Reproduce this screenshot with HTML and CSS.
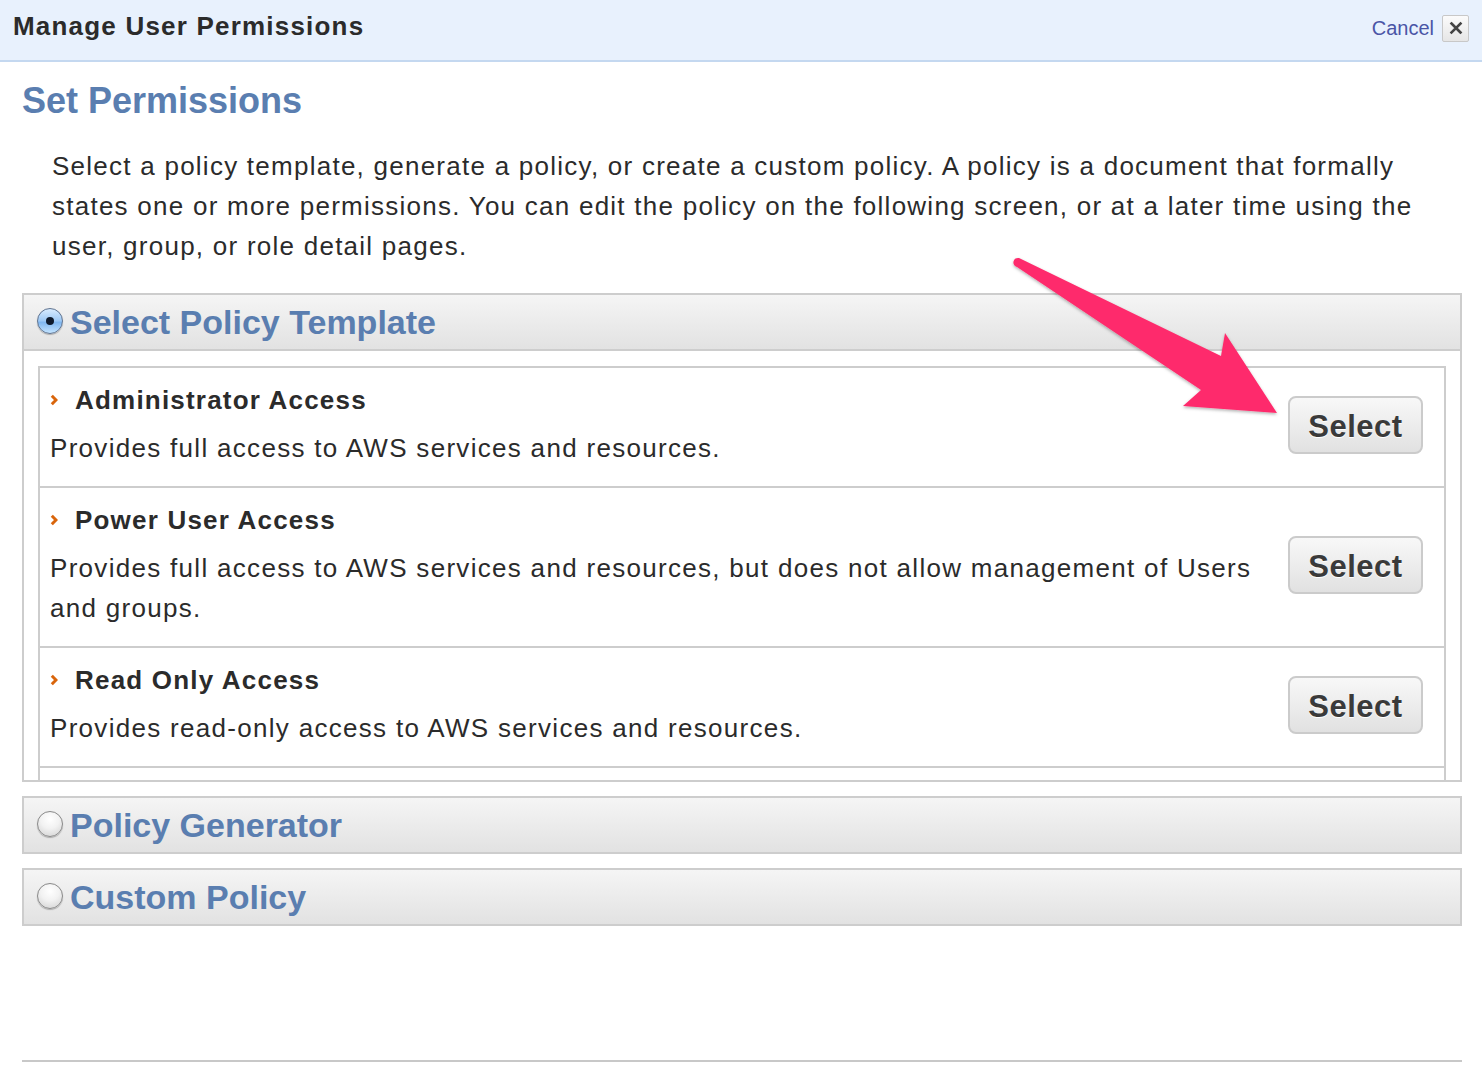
FILE: index.html
```html
<!DOCTYPE html>
<html>
<head>
<meta charset="utf-8">
<title>Manage User Permissions</title>
<link rel="stylesheet" href="styles.css">
</head>
<body>
<header class="topbar">
  <h1 class="topbar-title">Manage User Permissions</h1>
  <div class="topbar-actions">
    <a class="cancel-link" href="#">Cancel</a>
    <span class="close-box">
      <svg width="14" height="14" viewBox="0 0 14 14"><path d="M2.5 2.5 L11.5 11.5 M11.5 2.5 L2.5 11.5" stroke="#444" stroke-width="2.6" stroke-linecap="square"/></svg>
    </span>
  </div>
</header>

<main class="content">
  <h2 class="page-heading">Set Permissions</h2>
  <p class="intro">Select a policy template, generate a policy, or create a custom policy. A policy is a document that formally states one or more permissions. You can edit the policy on the following screen, or at a later time using the user, group, or role detail pages.</p>

  <section class="panel">
    <div class="panel-head">
      <span class="radio radio-on"><span class="radio-dot"></span></span>
      <span class="panel-title">Select Policy Template</span>
    </div>
    <div class="panel-body">
      <ul class="policy-list">
        <li class="policy">
          <div class="policy-text">
            <div class="policy-name"><svg class="chev" width="8" height="12" viewBox="0 0 8 12"><path d="M1.8 1.8 L6 6 L1.8 10.2" fill="none" stroke="#d9650b" stroke-width="3"/></svg>Administrator Access</div>
            <div class="policy-desc">Provides full access to AWS services and resources.</div>
          </div>
          <button class="select-btn">Select</button>
        </li>
        <li class="policy">
          <div class="policy-text">
            <div class="policy-name"><svg class="chev" width="8" height="12" viewBox="0 0 8 12"><path d="M1.8 1.8 L6 6 L1.8 10.2" fill="none" stroke="#d9650b" stroke-width="3"/></svg>Power User Access</div>
            <div class="policy-desc">Provides full access to AWS services and resources, but does not allow management of Users and groups.</div>
          </div>
          <button class="select-btn">Select</button>
        </li>
        <li class="policy">
          <div class="policy-text">
            <div class="policy-name"><svg class="chev" width="8" height="12" viewBox="0 0 8 12"><path d="M1.8 1.8 L6 6 L1.8 10.2" fill="none" stroke="#d9650b" stroke-width="3"/></svg>Read Only Access</div>
            <div class="policy-desc">Provides read-only access to AWS services and resources.</div>
          </div>
          <button class="select-btn">Select</button>
        </li>
      </ul>
    </div>
  </section>

  <section class="panel panel-collapsed">
    <div class="panel-head">
      <span class="radio"></span>
      <span class="panel-title">Policy Generator</span>
    </div>
  </section>

  <section class="panel panel-collapsed">
    <div class="panel-head">
      <span class="radio"></span>
      <span class="panel-title">Custom Policy</span>
    </div>
  </section>

  <div class="footer-rule"></div>
</main>

<svg class="callout-arrow" width="300" height="180" viewBox="0 0 300 180">
  <defs>
    <filter id="sh" x="-10%" y="-10%" width="130%" height="130%">
      <feDropShadow dx="0" dy="1.5" stdDeviation="1.5" flood-color="#000" flood-opacity="0.3"/>
    </filter>
  </defs>
  <path d="M19,8 L221,106 L225,83 L277,163 L183,156 L201,140 L17,17 A4.6,4.6 0 0 1 19,8 Z" fill="#fe2c6c" filter="url(#sh)"/>
</svg>
</body>
</html>
```

FILE: styles.css
```css
html, body {
  margin: 0;
  padding: 0;
  background: #ffffff;
  font-family: "Liberation Sans", Arial, Helvetica, sans-serif;
  color: #2b2b2b;
}

.topbar {
  height: 60px;
  background: #e8f1fd;
  border-bottom: 2px solid #c4d8f0;
  display: flex;
  justify-content: space-between;
  align-items: flex-start;
  padding: 0 13px 0 13px;
}

.topbar-title {
  margin: 0;
  font-size: 26px;
  letter-spacing: 1.2px;
  line-height: 53px;
  font-weight: bold;
  color: #2b2b2b;
}

.topbar-actions {
  display: flex;
  align-items: center;
  gap: 8px;
  margin-top: 14px;
}

.cancel-link {
  font-size: 20px;
  color: #4a55a6;
  text-decoration: none;
  line-height: 28px;
}

.close-box {
  width: 25px;
  height: 25px;
  border: 1px solid #c8c8c8;
  border-radius: 2px;
  background: linear-gradient(#fbfbfb, #e6e6e6);
  display: flex;
  align-items: center;
  justify-content: center;
}

.content {
  padding: 0 20px 0 22px;
}

.page-heading {
  margin: 19px 0 0 0;
  font-size: 36px;
  line-height: 40px;
  font-weight: bold;
  color: #5a7eb0;
}

.intro {
  margin: 25px 0 0 30px;
  width: 1380px;
  font-size: 26px;
  letter-spacing: 1.25px;
  line-height: 40px;
  color: #2b2b2b;
}

.panel {
  margin-top: 27px;
  border: 2px solid #cdcdcd;
}

.panel-collapsed {
  margin-top: 14px;
}

.panel-head {
  height: 54px;
  display: flex;
  align-items: center;
  gap: 7px;
  padding-left: 13px;
  background: linear-gradient(#f5f5f5, #e2e2e2);
}

.panel > .panel-head + .panel-body {
  border-top: 2px solid #cdcdcd;
}

.panel-title {
  font-size: 34px;
  font-weight: bold;
  color: #5a7eb0;
  line-height: 40px;
}

.radio {
  width: 24px;
  height: 24px;
  border-radius: 50%;
  border: 1px solid #8a8a8a;
  background: radial-gradient(circle at 50% 30%, #ffffff 0%, #f2f2f2 45%, #cfcfcf 100%);
  box-shadow: 0 1px 1px rgba(0,0,0,0.25);
  display: flex;
  align-items: center;
  justify-content: center;
  flex: none;
  position: relative;
  top: -1px;
}

.radio-on {
  border-color: #5f7390;
  background: linear-gradient(#d8ecff 0%, #9cc8f5 50%, #7fb6f0 55%, #c4e4ff 100%);
}

.radio-dot {
  width: 8px;
  height: 8px;
  border-radius: 50%;
  background: #0e1a2c;
}

.panel-body {
  padding: 15px 14px 0 14px;
}

.policy-list {
  list-style: none;
  margin: 0;
  padding: 0 0 12px 0;
  border: 2px solid #cdcdcd;
  border-bottom: none;
}

.policy {
  display: flex;
  align-items: center;
  justify-content: space-between;
  padding: 12px 21px 18px 10px;
  border-bottom: 2px solid #cdcdcd;
}

.policy-text {
  width: 1220px;
}

.policy-name {
  font-size: 26px;
  letter-spacing: 1.2px;
  font-weight: bold;
  line-height: 40px;
  color: #2b2b2b;
  display: flex;
  align-items: center;
}

.chev {
  margin: 0 17px 0 0;
}

.policy-desc {
  margin-top: 8px;
  font-size: 26px;
  letter-spacing: 1.3px;
  line-height: 40px;
  color: #2b2b2b;
}

.select-btn {
  width: 135px;
  height: 58px;
  margin-top: 2px;
  border: 2px solid #cbcbcb;
  border-radius: 8px;
  background: linear-gradient(#f8f8f8, #e1e1e1);
  font-family: "Liberation Sans", Arial, Helvetica, sans-serif;
  font-size: 31px;
  letter-spacing: 0.5px;
  font-weight: bold;
  color: #3a3a3a;
  text-shadow: 0 1px 0 #ffffff;
  padding: 3px 0 0 0;
  flex: none;
}

.footer-rule {
  margin-top: 134px;
  width: 1440px;
  height: 2px;
  background: #c8c8c8;
}

.callout-arrow {
  position: absolute;
  left: 1000px;
  top: 250px;
}
```
